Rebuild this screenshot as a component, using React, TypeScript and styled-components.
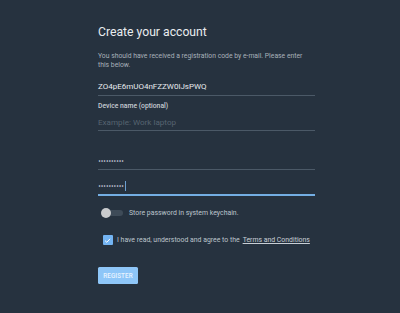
import React from "react";
import styled, { createGlobalStyle } from "styled-components";

const Global = createGlobalStyle`
  html, body { margin: 0; padding: 0; background: #26323f; }
  body { font-family: Roboto, "Noto Sans", "Liberation Sans", sans-serif; }
  * { box-sizing: border-box; }
`;

const Page = styled.div`
  width: 400px;
  height: 313px;
  background: #26323f;
  padding: 24px 0 0 98px;
  overflow: hidden;
`;

const Form = styled.div`
  width: 217px;
  display: flex;
  flex-direction: column;
`;

const Title = styled.h1`
  margin: 0;
  font-size: 12.2px;
  line-height: 16px;
  font-weight: 400;
  color: #e9ecef;
`;

const Intro = styled.p`
  margin: 12px 0 0;
  font-size: 6.8px;
  line-height: 8.5px;
  color: #a8b1ba;
`;

const Field = styled.div<{ $focused?: boolean; $top: number }>`
  margin-top: ${(p) => p.$top}px;
  height: ${(p) => (p.$focused ? 19 : 18)}px;
  display: flex;
  align-items: center;
  border-bottom: ${(p) => (p.$focused ? "2px solid #74aee3" : "1px solid #4b5967")};
`;

const Value = styled.span<{ $placeholder?: boolean }>`
  font-size: ${(p) => (p.$placeholder ? 8.1 : 8)}px;
  line-height: 10px;
  color: ${(p) => (p.$placeholder ? "#566471" : "#e7eaee")};
  white-space: nowrap;
`;

const Dots = styled.span`
  font-size: 5.2px;
  letter-spacing: -0.5px;
  line-height: 10px;
  color: #d9dde2;
  font-family: "DejaVu Sans", sans-serif;
`;

const Caret = styled.span`
  width: 1.3px;
  height: 10px;
  margin-left: 1.5px;
  background: #6b9fd0;
`;

const Label = styled.div`
  margin-top: 6px;
  font-size: 6.8px;
  line-height: 9px;
  font-weight: 500;
  color: #c6ccd3;
`;

const Row = styled.div<{ $top: number }>`
  margin-top: ${(p) => p.$top}px;
  display: flex;
  align-items: center;
  font-size: 6.9px;
  line-height: 10px;
  color: #bcc4cc;
  white-space: nowrap;
`;

const Toggle = styled.span`
  position: relative;
  width: 22px;
  height: 10px;
  margin-left: 3px;
  margin-right: 6px;
  display: inline-block;
  &::before {
    content: "";
    position: absolute;
    left: 2px;
    right: 0;
    top: 2px;
    height: 6px;
    border-radius: 3px;
    background: #3e4b58;
  }
  &::after {
    content: "";
    position: absolute;
    left: 0;
    top: 0;
    width: 10px;
    height: 10px;
    border-radius: 50%;
    background: #c9cbcd;
  }
`;

const Check = styled.span`
  width: 9.5px;
  height: 9.5px;
  margin-left: 5px;
  margin-right: 4.5px;
  border-radius: 1px;
  background: #73b4f2;
  display: inline-flex;
  align-items: center;
  justify-content: center;
`;

const TermsLink = styled.a`
  margin-left: 3px;
  color: #c8cfd6;
  text-decoration: underline;
  text-underline-offset: 1px;
`;

const Button = styled.button`
  margin-top: 22px;
  align-self: flex-start;
  width: 40px;
  height: 17px;
  padding: 0;
  border: none;
  border-radius: 1.5px;
  background: #8ec6f8;
  color: #e9f4ff;
  font-family: inherit;
  font-size: 6.3px;
  font-weight: 500;
  letter-spacing: 0.1px;
`;

export default function App() {
  return (
    <>
      <Global />
      <Page>
        <Form>
          <Title>Create your account</Title>
          <Intro>
            You should have received a registration code by e-mail. Please enter
            this below.
          </Intro>
          <Field $top={9}>
            <Value>ZO4pE6mUO4nFZZW0lJsPWQ</Value>
          </Field>
          <Label>Device name (optional)</Label>
          <Field $top={2}>
            <Value $placeholder>Example: Work laptop</Value>
          </Field>
          <Field $top={21}>
            <Dots>••••••••••</Dots>
          </Field>
          <Field $top={7} $focused>
            <Dots>••••••••••</Dots>
            <Caret />
          </Field>
          <Row $top={12}>
            <Toggle />
            Store password in system keychain.
          </Row>
          <Row $top={17}>
            <Check>
              <svg width="7" height="7" viewBox="0 0 10 10">
                <path d="M1.5 5.2 L4 7.6 L8.6 2.6" fill="none" stroke="#ffffff" strokeWidth="1.4" />
              </svg>
            </Check>
            I have read, understood and agree to the
            <TermsLink>Terms and Conditions</TermsLink>
          </Row>
          <Button>REGISTER</Button>
        </Form>
      </Page>
    </>
  );
}
